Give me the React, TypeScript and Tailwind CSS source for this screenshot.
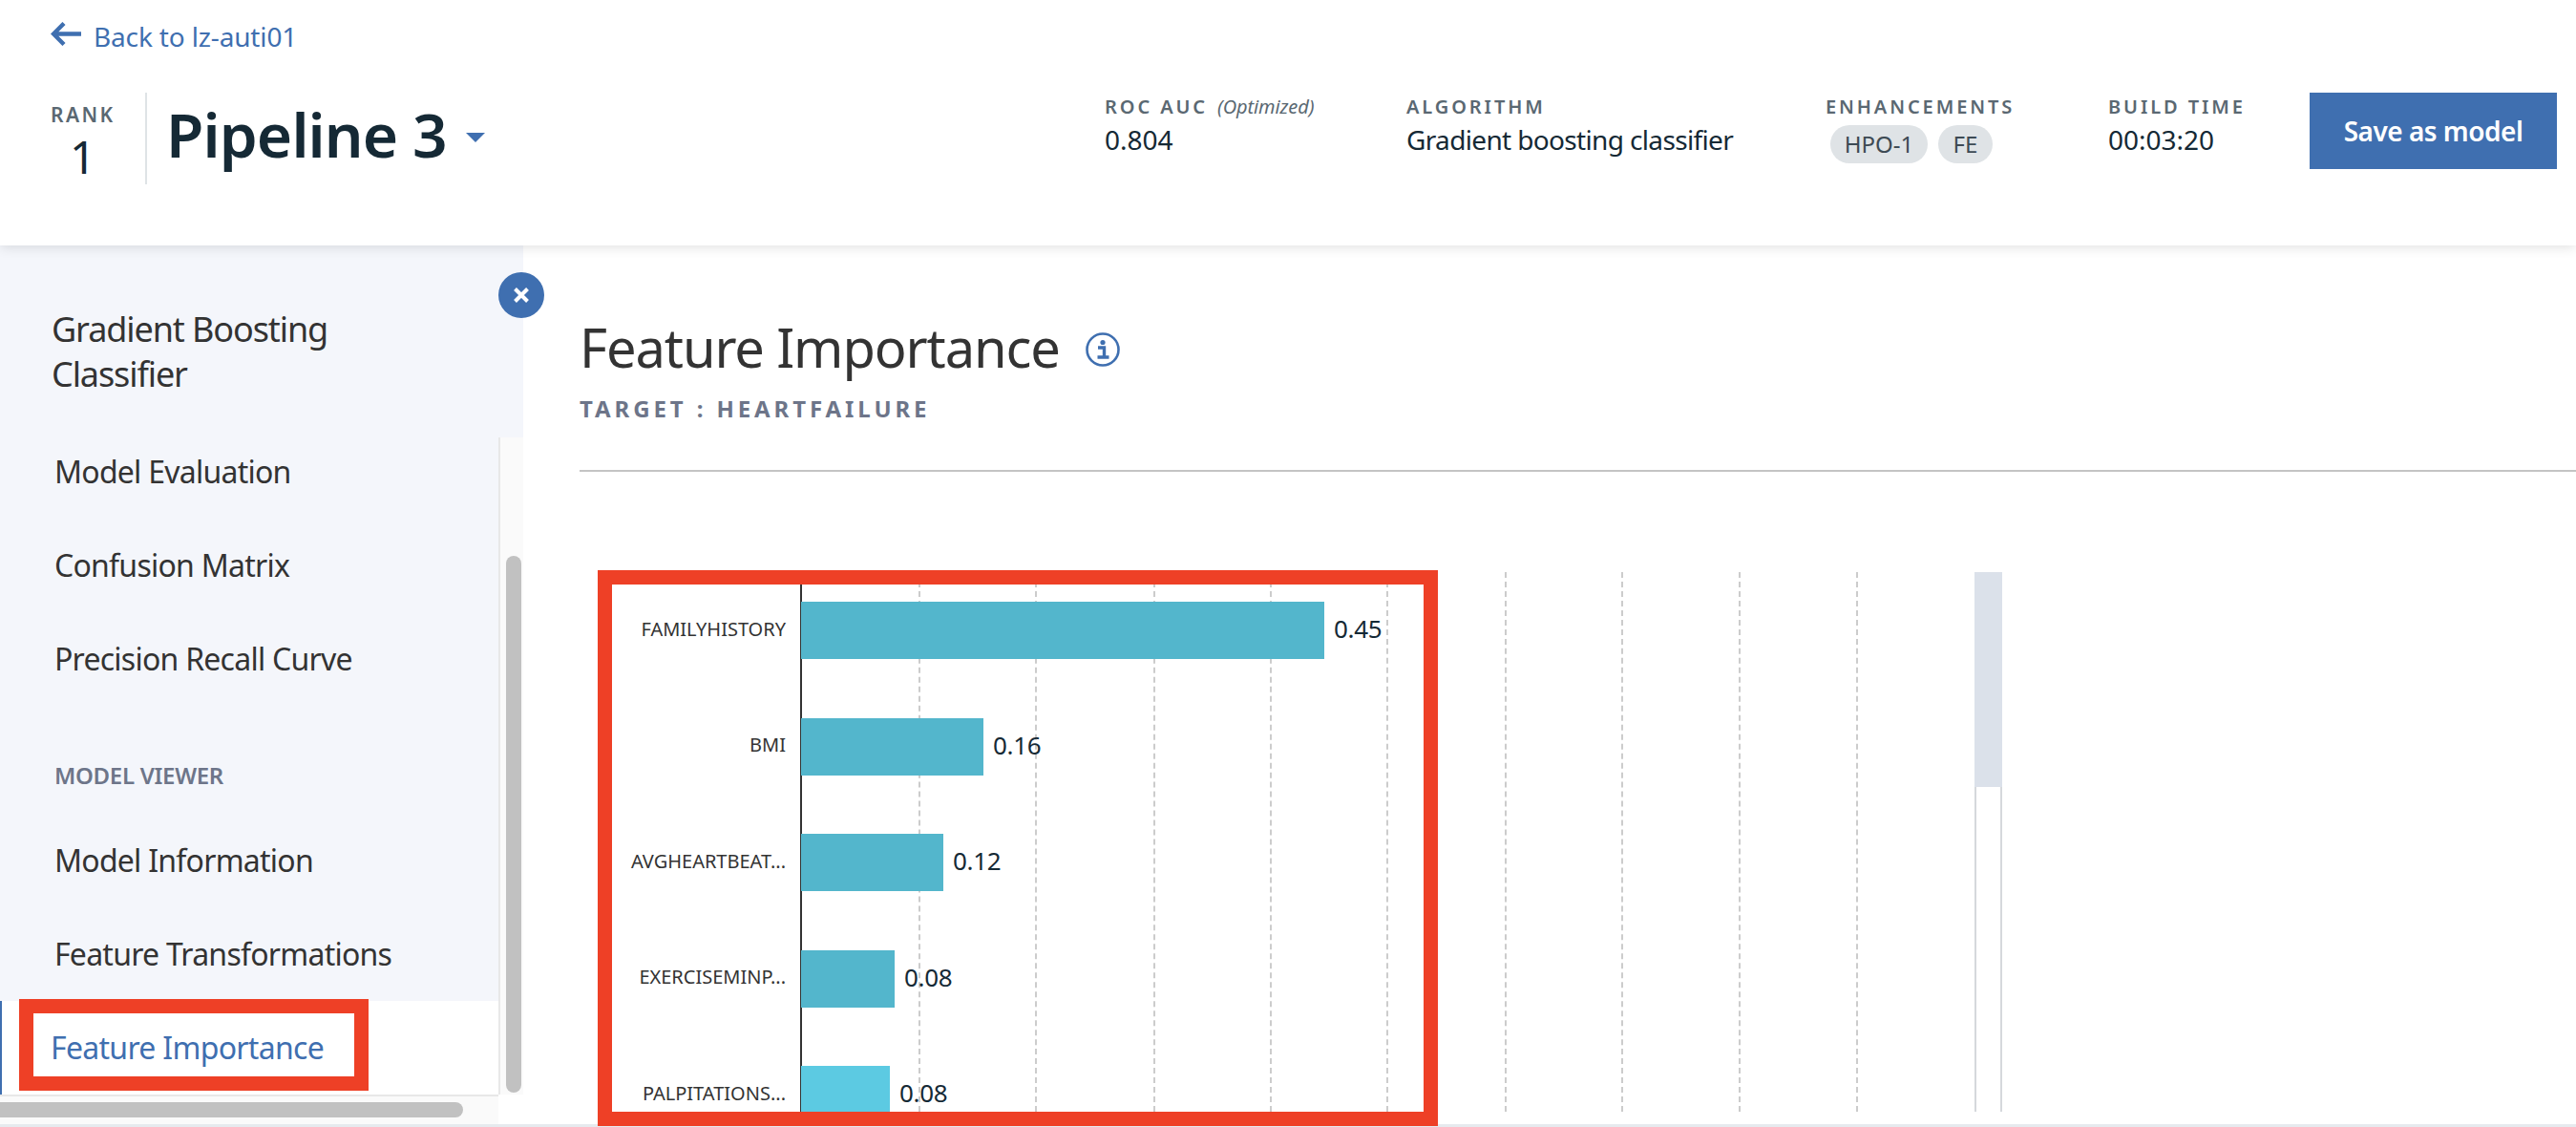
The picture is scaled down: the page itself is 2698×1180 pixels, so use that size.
const gridXs = [963, 1085, 1209, 1331, 1453, 1577, 1699, 1822, 1945];
const rows = [
  { label: "FAMILYHISTORY", value: "0.45", width: 548, color: "#53b6cc" },
  { label: "BMI", value: "0.16", width: 191, color: "#53b6cc" },
  { label: "AVGHEARTBEAT...", value: "0.12", width: 149, color: "#53b6cc" },
  { label: "EXERCISEMINP...", value: "0.08", width: 98, color: "#53b6cc" },
  { label: "PALPITATIONS...", value: "0.08", width: 93, color: "#5ccae2" },
];

function Metric({ label, note, children, width }: { label: string; note?: string; children: React.ReactNode; width: string }) {
  return (
    <div className={width}>
      <div className="flex items-center h-[30px] text-[20px] leading-[30px] font-semibold tracking-[2.9px] text-[#5a6872] whitespace-nowrap">
        {label}
        {note && <span className="ml-[10px] text-[20px] italic font-normal tracking-[-0.1px]">{note}</span>}
      </div>
      <div className="mt-1">{children}</div>
    </div>
  );
}

function NavItem({ children }: { children: React.ReactNode }) {
  return <div className="h-[98px] flex items-center pl-[57px] text-[32px] tracking-[-0.75px] text-[#333333] whitespace-nowrap">{children}</div>;
}

export default function App() {
  return (
    <div className="w-[2698px] h-[1180px] overflow-hidden bg-white relative font-['Noto_Sans',sans-serif]">
      <header className="h-[257px] relative z-10 bg-white shadow-[0_2px_12px_rgba(0,0,0,0.12)]">
        <div className="flex items-center pl-[53px] pt-[16px] h-[47px] box-content">
          <svg className="mb-[8px]" width="32" height="25" viewBox="0 0 32 25" fill="none" stroke="#3f6fb0" strokeWidth="4.4">
            <path d="M32 12.5H3M14 1.5 3 12.5l11 11" />
          </svg>
          <span className="ml-[13px] mb-[3px] text-[28px] tracking-[-0.15px] text-[#3f6fb0] whitespace-nowrap">Back to lz-auti01</span>
        </div>
        <div className="flex items-start mt-[34px]">
          <div className="w-[100px] ml-[53px] -mr-px">
            <div className="h-[39px] flex items-end text-[21px] font-semibold tracking-[2.4px] text-[#5a6872]">RANK</div>
            <div className="text-[48px] leading-[56px] text-[#152935] pl-[20px]">1</div>
          </div>
          <div className="w-[2px] h-[96px] bg-[#dfe3e6]" />
          <div className="flex items-center h-[88px] ml-[20px]">
            <span className="text-[64px] font-semibold tracking-[-0.9px] text-[#152935] whitespace-nowrap">Pipeline 3</span>
            <svg className="ml-[20px] mt-[6px]" width="20" height="10" viewBox="0 0 20 10"><path d="M0 0h20L10 10z" fill="#3f6fb0" /></svg>
          </div>
          <div className="ml-auto flex items-start mr-[20px]">
            <Metric label="ROC AUC" note="(Optimized)" width="w-[316px]">
              <div className="text-[28px] leading-[30px] text-[#152935]">0.804</div>
            </Metric>
            <Metric label="ALGORITHM" width="w-[439px]">
              <div className="text-[28px] leading-[30px] tracking-[-0.65px] text-[#152935] whitespace-nowrap">Gradient boosting classifier</div>
            </Metric>
            <Metric label="ENHANCEMENTS" width="w-[296px]">
              <div className="flex gap-[11px] ml-[5px] mt-[4px]">
                <span className="w-[102px] h-[40px] text-center rounded-full bg-[#dfe3e6] text-[24px] leading-[40px] text-[#3d4a54]">HPO-1</span>
                <span className="w-[57px] h-[40px] text-center rounded-full bg-[#dfe3e6] text-[24px] leading-[40px] text-[#3d4a54]">FE</span>
              </div>
            </Metric>
            <Metric label="BUILD TIME" width="w-[211px]">
              <div className="text-[28px] leading-[30px] text-[#152935]">00:03:20</div>
            </Metric>
            <button className="w-[259px] h-[80px] bg-[#3f6fb0] text-white text-[28px] tracking-[-0.5px] font-semibold">Save as model</button>
          </div>
        </div>
      </header>

      <div className="flex h-[923px]">
        <aside className="w-[548px] shrink-0 relative">
          <div className="h-[201px] bg-[#f4f6fb] pl-[54px] pt-[64px] text-[36px] leading-[47px] tracking-[-1.1px] text-[#333333]">Gradient Boosting<br />Classifier</div>
          <div className="flex h-[688px]">
            <nav className="w-[524px] bg-[#f4f6fb] border-r-2 border-[#e8e8e8]">
              <div className="-mt-[13px]">
                <NavItem>Model Evaluation</NavItem>
                <NavItem>Confusion Matrix</NavItem>
                <NavItem>Precision Recall Curve</NavItem>
                <div className="h-[48px]" />
                <div className="h-[50px] flex items-center pl-[57px] text-[24px] font-semibold tracking-[-0.3px] text-[#6d7589]">MODEL VIEWER</div>
                <div className="h-[15px]" />
                <NavItem>Model Information</NavItem>
                <NavItem>Feature Transformations</NavItem>
                <div className="h-[98px] flex items-center pl-[51px] bg-white border-l-2 border-[#3f6fb0] text-[32px] tracking-[-0.7px] text-[#3f6fb0]">Feature Importance</div>
              </div>
            </nav>
            <div className="flex-1 relative bg-[#fafafa]">
              <div className="absolute left-[6px] top-[124px] bottom-[2px] w-[16px] rounded-full bg-[#c1c1c1]" />
            </div>
          </div>
          <div className="h-[34px] w-[522px] bg-[#fafafa] border-t-2 border-[#e8e8e8] relative">
            <div className="absolute left-0 top-[6px] w-[485px] h-[16px] rounded-l-[4px] rounded-r-full bg-[#c1c1c1]" />
          </div>
          <button className="absolute left-[522px] top-[28px] w-[48px] h-[48px] rounded-full bg-[#3f6fb0] flex items-center justify-center z-20">
            <svg width="18" height="18" viewBox="0 0 18 18" stroke="#fff" strokeWidth="4"><path d="M2.5 2.5l13 13M15.5 2.5l-13 13" /></svg>
          </button>
        </aside>

        <main className="flex-1 pl-[59px] min-w-0">
          <div className="h-[237px] border-b-2 border-[#c4c4c4] pt-[70px] box-border">
            <div className="flex items-center h-[72px]">
              <h1 className="text-[56px] text-[#333333] tracking-[-1.1px] whitespace-nowrap">Feature Importance</h1>
              <svg className="ml-[27px] mt-[6px]" width="36" height="36" viewBox="0 0 36 36" fill="none">
                <circle cx="18" cy="18" r="16.5" stroke="#3f6fb0" strokeWidth="2.6" />
                <circle cx="18" cy="10.5" r="2.6" fill="#3f6fb0" />
                <path d="M13 16h6.5v10M12.5 26h12" stroke="#3f6fb0" strokeWidth="3.4" />
              </svg>
            </div>
            <div className="mt-[11px] text-[24px] font-bold tracking-[3.9px] text-[#6d7589] whitespace-nowrap">TARGET : HEARTFAILURE</div>
          </div>

          <div className="relative h-[567px] mt-[105px] -ml-[607px]">
            {gridXs.map((x) => (
              <div key={x} className="absolute top-0 bottom-[2px] border-l-2 border-dashed border-[#cccccc]" style={{ left: x - 1 }} />
            ))}
            <div className="absolute left-[838px] top-[13px] bottom-[2px] w-[2px] bg-[#333333]" />
            <div className="absolute left-[2068px] top-0 bottom-[2px] w-[29px] border-x-2 border-[#d5d8dc]">
              <div className="-mx-[2px] h-[225px] bg-[#dbe1ea]" />
            </div>
            <div className="pt-[31px] relative">
              {rows.map((r) => (
                <div key={r.label} className="flex items-center h-[60px] mb-[61.5px] last:mb-0">
                  <div className="w-[823px] pb-[3px] text-right text-[20px] text-[#333333] whitespace-nowrap">{r.label}</div>
                  <div className="h-[60px] ml-[16px]" style={{ width: r.width, backgroundColor: r.color }} />
                  <div className="ml-[10px] pb-[3px] text-[26px] tracking-[-0.3px] text-[#152935]">{r.value}</div>
                </div>
              ))}
            </div>
          </div>
        </main>
      </div>

      <div className="absolute left-0 right-0 bottom-0 h-[3px] bg-[#e6eaee]" />
      <div className="absolute left-[626px] top-[597px] w-[880px] h-[582px] border-[15px] border-[#ee4026] z-20 pointer-events-none" />
      <div className="absolute left-[20px] top-[1046px] w-[366px] h-[96px] border-[15px] border-[#ee4026] z-20 pointer-events-none" />
    </div>
  );
}
